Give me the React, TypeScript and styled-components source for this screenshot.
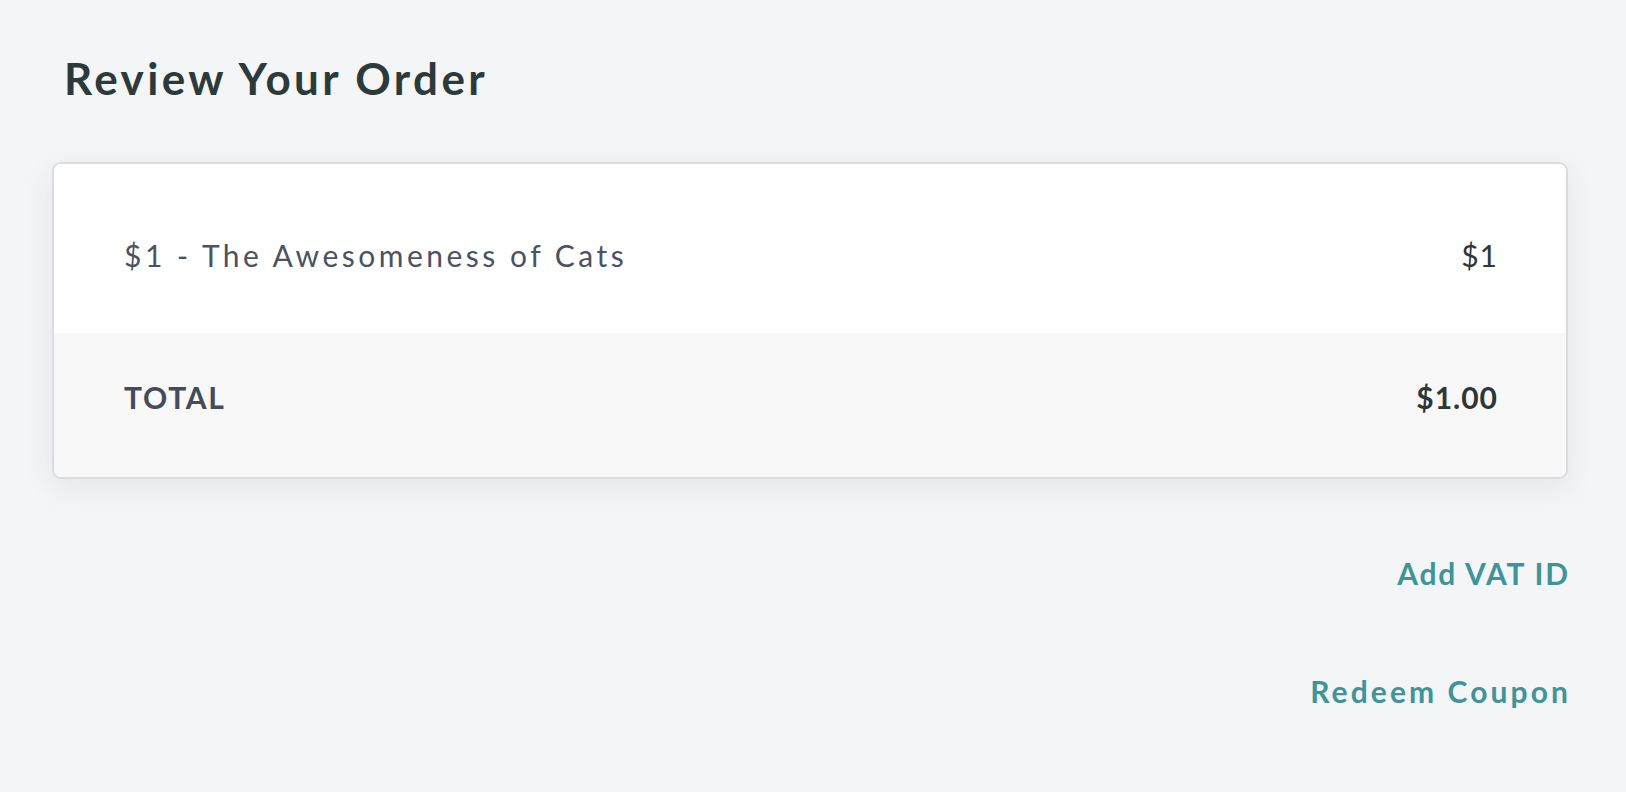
import styled, { createGlobalStyle } from 'styled-components'

const GlobalStyle = createGlobalStyle`
  html, body {
    margin: 0;
    padding: 0;
    background: #f4f5f7;
    font-family: Lato, "Open Sans", sans-serif;
  }
`

const Page = styled.main`
  padding: 52px 58px 60px 52px;
`

const Title = styled.h1`
  margin: 0 0 58px 12px;
  font-size: 44px;
  line-height: 52px;
  font-weight: 700;
  letter-spacing: 3.4px;
  color: #2d3a3a;
`

const Card = styled.section`
  background: #fff;
  border: 2px solid #dadcdf;
  border-radius: 9px;
  overflow: hidden;
  box-shadow: 0 8px 30px rgba(40, 50, 60, 0.08);
`

const Row = styled.div<{ $total?: boolean }>`
  display: flex;
  justify-content: space-between;
  align-items: baseline;
  padding: ${(p) => (p.$total ? '46px 68px 62px 70px' : '73px 68px 60px 70px')};
  background: ${(p) => (p.$total ? '#f8f8f9' : '#fff')};
  font-size: 30px;
  line-height: 36px;
`

const Label = styled.span<{ $bold?: boolean }>`
  color: ${(p) => (p.$bold ? '#444b59' : '#4b5262')};
  font-weight: ${(p) => (p.$bold ? 700 : 400)};
  letter-spacing: ${(p) => (p.$bold ? '1.7px' : '3.5px')};
`

const Amount = styled.span<{ $bold?: boolean }>`
  color: #2f3636;
  font-weight: ${(p) => (p.$bold ? 700 : 400)};
  letter-spacing: 1px;
`

const Links = styled.div`
  display: flex;
  flex-direction: column;
  align-items: flex-end;
  gap: 82px;
  margin-top: 76px;
`

const LinkButton = styled.a<{ $spacing: number }>`
  margin-right: ${(p) => -p.$spacing}px;
  font-size: 30px;
  line-height: 36px;
  font-weight: 700;
  letter-spacing: ${(p) => p.$spacing}px;
  color: #3f9499;
  text-decoration: none;
  cursor: pointer;
`

export default function App() {
  return (
    <>
      <GlobalStyle />
      <Page>
        <Title>Review Your Order</Title>
        <Card>
          <Row>
            <Label>$1 - The Awesomeness of Cats</Label>
            <Amount>$1</Amount>
          </Row>
          <Row $total>
            <Label $bold>TOTAL</Label>
            <Amount $bold>$1.00</Amount>
          </Row>
        </Card>
        <Links>
          <LinkButton $spacing={1.8}>Add VAT ID</LinkButton>
          <LinkButton $spacing={3.1}>Redeem Coupon</LinkButton>
        </Links>
      </Page>
    </>
  )
}
